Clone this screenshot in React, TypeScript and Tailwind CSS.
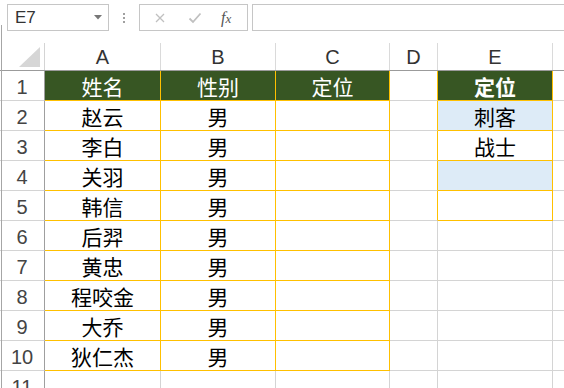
const cols = [
  { key: "A", w: "w-[116px]" },
  { key: "B", w: "w-[115px]" },
  { key: "C", w: "w-[114px]" },
  { key: "D", w: "w-[48px]" },
  { key: "E", w: "w-[115px]" },
];

const people = [
  ["赵云", "男"],
  ["李白", "男"],
  ["关羽", "男"],
  ["韩信", "男"],
  ["后羿", "男"],
  ["黄忠", "男"],
  ["程咬金", "男"],
  ["大乔", "男"],
  ["狄仁杰", "男"],
];

const roles = ["刺客", "战士", "", ""];

const GREEN = "bg-[#375623]";

function cellText(row: number, col: string) {
  if (row === 1) {
    if (col === "A") return "姓名";
    if (col === "B") return "性别";
    if (col === "C") return "定位";
    if (col === "E") return "定位";
    return "";
  }
  if (col === "A" && row <= 10) return people[row - 2][0];
  if (col === "B" && row <= 10) return people[row - 2][1];
  if (col === "E" && row <= 5) return roles[row - 2];
  return "";
}

function Cell({ row, col, w }: { row: number; col: string; w: string }) {
  const inTable = ["A", "B", "C"].includes(col) && row <= 10;
  const inRoles = col === "E" && row <= 5;
  const rightYellow = inTable || inRoles || (col === "D" && row <= 5);
  const bottomYellow = inTable || inRoles;
  const header = row === 1 && (inTable || inRoles);
  const blue = col === "E" && (row === 2 || row === 4);

  let bg = "bg-white";
  if (header) bg = GREEN;
  else if (blue) bg = "bg-[#ddebf7]";

  return (
    <div
      className={`${w} h-[30px] shrink-0 flex items-center justify-center pt-[3px] border-r border-b ${bg} ${
        rightYellow ? "border-r-[#ffc000]" : "border-r-[#d4d4d4]"
      } ${bottomYellow ? "border-b-[#ffc000]" : "border-b-[#d4d4d4]"} ${
        header ? "text-white" : "text-black"
      } ${header && col === "E" ? "font-bold" : ""} text-[21px] leading-none`}
    >
      {cellText(row, col)}
    </div>
  );
}

export default function App() {
  const rows = Array.from({ length: 11 }, (_, i) => i + 1);

  return (
    <div
      className="relative w-[564px] h-[388px] overflow-hidden bg-white"
      style={{ fontFamily: '"Noto Sans", "Noto Sans CJK SC", sans-serif' }}
    >
      {/* window edge */}
      <div className="absolute left-[1px] top-[25px] bottom-0 w-px bg-[#a6a6a6]" />

      {/* formula bar */}
      <div className="flex h-[43px] pt-[4px] pl-[7px]">
        <div className="w-[102px] h-[27px] border border-[#c6c6c6] flex items-center justify-between pl-[7px] pr-[6px]">
          <span className="text-[17px] text-[#333] font-['Liberation_Sans',sans-serif]">E7</span>
          <svg width="8" height="5" viewBox="0 0 8 5">
            <polygon points="0,0 8,0 4,4.5" fill="#777" />
          </svg>
        </div>
        <div className="w-[30px] h-[27px] flex flex-col items-center justify-center gap-[2px]">
          <span className="w-[2px] h-[2px] bg-[#a0a0a0]" />
          <span className="w-[2px] h-[2px] bg-[#a0a0a0]" />
          <span className="w-[2px] h-[2px] bg-[#a0a0a0]" />
        </div>
        <div className="w-[109px] h-[27px] border border-[#c6c6c6] flex items-center pl-[14px]">
          <svg width="12" height="12" viewBox="0 0 12 12">
            <path d="M2 2 L10 10 M10 2 L2 10" stroke="#c0c0c0" strokeWidth="1.3" />
          </svg>
          <svg className="ml-[22px]" width="14" height="12" viewBox="0 0 14 12">
            <path d="M1.5 6.5 L5 10 L12.5 1.5" stroke="#c0c0c0" strokeWidth="1.8" fill="none" />
          </svg>
          <span className="ml-[19px] text-[16px] leading-none italic text-[#555] font-['Liberation_Serif',serif]">
            f<span className="text-[13px]">x</span>
          </span>
        </div>
        <div className="ml-[4px] flex-1 h-[27px] border-y border-l border-[#c6c6c6]" />
      </div>

      {/* column headers */}
      <div className="flex h-[28px] border-b border-[#9b9b9b]">
        <div className="w-[45px] shrink-0 border-r border-[#d4d4d4] flex items-end justify-end pr-[4px] pb-[3px]">
          <svg width="21" height="20" viewBox="0 0 21 20">
            <polygon points="21,0 21,20 0,20" fill="#d6d6d6" />
          </svg>
        </div>
        {cols.map((c) => (
          <div
            key={c.key}
            className={`${c.w} shrink-0 border-r border-[#dadada] flex items-center justify-center text-[20px] text-[#333] font-['Liberation_Sans',sans-serif]`}
          >
            {c.key}
          </div>
        ))}
        <div className="flex-1" />
      </div>

      {/* rows */}
      {rows.map((r) => (
        <div key={r} className="flex">
          <div className="w-[45px] h-[30px] shrink-0 border-r border-r-[#9f9f9f] border-b border-b-[#d4d4d4] flex items-center justify-center pt-[3px] text-[20px] text-[#444] font-['Liberation_Sans',sans-serif]">
            {r}
          </div>
          {cols.map((c) => (
            <Cell key={c.key} row={r} col={c.key} w={c.w} />
          ))}
          <div className="flex-1 h-[30px] border-b border-[#d4d4d4]" />
        </div>
      ))}
    </div>
  );
}
